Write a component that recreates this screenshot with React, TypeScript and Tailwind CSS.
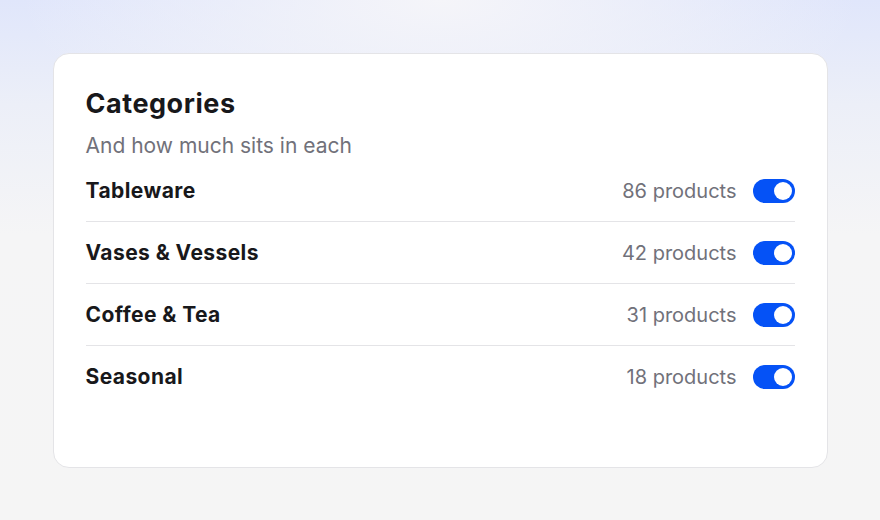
import { useState } from 'react';

const categories = [
  { name: 'Tableware', count: 86 },
  { name: 'Vases & Vessels', count: 42 },
  { name: 'Coffee & Tea', count: 31 },
  { name: 'Seasonal', count: 18 },
];

function Toggle({ on, onClick }: { on: boolean; onClick: () => void }) {
  return (
    <button
      onClick={onClick}
      className={`flex h-[24px] w-[42px] items-center rounded-full px-[3px] ${
        on ? 'justify-end bg-[#0552f6]' : 'justify-start bg-[#d4d4d8]'
      }`}
    >
      <span className="h-[18px] w-[18px] rounded-full bg-white" />
    </button>
  );
}

export default function App() {
  const [enabled, setEnabled] = useState(categories.map(() => true));

  return (
    <div
      className="flex h-[520px] w-full justify-center pt-[53px] bg-[radial-gradient(ellipse_420px_160px_at_50%_0%,#f5f5f9_0%,transparent_100%),linear-gradient(to_bottom,#e0e6fb_0%,#eceff8_20%,#f5f5f6_45%,#f5f5f5_100%)]"
      style={{ fontFamily: 'Inter, "Noto Sans", sans-serif' }}
    >
      <div className="flex h-[415px] w-[775px] flex-col rounded-2xl border border-[#e4e4e7] bg-white px-8 pb-8 pt-[33px]">
        {/* Header */}
        <h1 className="text-[27px] font-bold leading-[34px] tracking-[0.02em] text-[#18181b]">Categories</h1>
        <p className="mt-[11px] text-[21px] leading-[28px] text-[#71717a]">And how much sits in each</p>

        {/* Rows */}
        <div className="flex flex-col">
          {categories.map((c, idx) => (
            <div
              key={c.name}
              className={`flex h-[62px] items-center justify-between ${
                idx < categories.length - 1 ? 'border-b border-[#e4e4e7]' : ''
              }`}
            >
              <span className="text-[21px] font-bold tracking-[0.02em] text-[#18181b]">{c.name}</span>
              <div className="flex items-center gap-4">
                <span className="text-[20px] text-[#71717a]">{c.count} products</span>
                <Toggle
                  on={enabled[idx]}
                  onClick={() => setEnabled(enabled.map((v, i) => (i === idx ? !v : v)))}
                />
              </div>
            </div>
          ))}
        </div>
      </div>
    </div>
  );
}
